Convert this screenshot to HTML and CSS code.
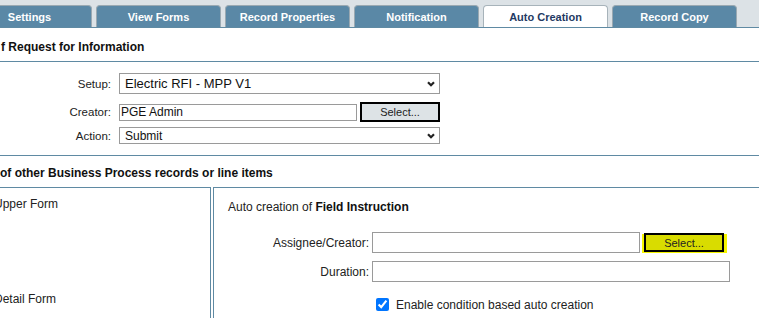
FILE: index.html
```html
<!DOCTYPE html>
<html lang="en">
<head>
    <meta charset="UTF-8">
    <title>Auto Creation</title>
    <link rel="stylesheet" href="styles.css">
</head>
<body>
    <!-- Tabs -->
    <div class="tabs">
        <div class="tab">Settings</div>
        <div class="tab">View Forms</div>
        <div class="tab">Record Properties</div>
        <div class="tab">Notification</div>
        <div class="tab active">Auto Creation</div>
        <div class="tab">Record Copy</div>
    </div>

    <!-- Request for Information -->
    <div class="section-title">f Request for Information</div>
    <div class="setup">
        <div class="row row-setup">
            <label class="lbl">Setup:</label>
            <div class="select select-big">
                <span>Electric RFI - MPP V1</span>
                <svg class="chev" width="8" height="6" viewBox="0 0 8 6"><path d="M1 1.2 L4 4.2 L7 1.2" fill="none" stroke="#222" stroke-width="2"/></svg>
            </div>
        </div>
        <div class="row row-creator">
            <label class="lbl">Creator:</label>
            <input class="text creator" type="text" value="PGE Admin">
            <button class="btn">Select...</button>
        </div>
        <div class="row row-action">
            <label class="lbl">Action:</label>
            <div class="select select-small">
                <span>Submit</span>
                <svg class="chev" width="8" height="6" viewBox="0 0 8 6"><path d="M1 1.2 L4 4.2 L7 1.2" fill="none" stroke="#222" stroke-width="2"/></svg>
            </div>
        </div>
    </div>

    <!-- Other records -->
    <div class="section-title title-2">of other Business Process records or line items</div>
    <div class="panels">
        <div class="forms">
            <div class="form-name">Upper Form</div>
            <div class="form-name detail">Detail Form</div>
        </div>
        <div class="detail-panel">
            <div class="panel-title">Auto creation of <b>Field Instruction</b></div>
            <div class="prow">
                <label class="plbl">Assignee/Creator:</label>
                <input class="text assignee" type="text">
                <button class="btn btn-hl">Select...</button>
            </div>
            <div class="prow prow-2">
                <label class="plbl">Duration:</label>
                <input class="text duration" type="text">
            </div>
            <div class="check-row">
                <input type="checkbox" id="cond" checked>
                <label for="cond">Enable condition based auto creation</label>
            </div>
        </div>
    </div>
</body>
</html>
```

FILE: styles.css
```css
* {
    box-sizing: border-box;
}

body {
    margin: 0;
    font-family: 'Liberation Sans', Arial, sans-serif;
    font-size: 12px;
    color: #111;
    background: #fff;
    overflow: hidden;
}

.tabs {
    display: flex;
    gap: 4px;
    height: 28px;
    padding-top: 5px;
    padding-left: 0;
    background: #dce2e6;
    border-bottom: 1px solid #5f8aa3;
    overflow: hidden;
}

.tab {
    flex: 0 0 125px;
    height: 22px;
    background: #5a88a6;
    border: 1px solid #9aa9b2;
    border-bottom: none;
    border-radius: 4px 4px 0 0;
    color: #fff;
    font-weight: bold;
    font-size: 11px;
    text-align: center;
    line-height: 22px;
}

.tab:first-child {
    margin-left: -33px;
}

.tab.active {
    background: #fff;
    color: #1f3a63;
    border-color: #a7b3ba;
}

.section-title {
    height: 34px;
    padding-top: 12px;
    padding-left: 1px;
    font-weight: bold;
    font-size: 12px;
    line-height: 15px;
    border-bottom: 1px solid #5f8aa3;
}

.setup {
    padding: 11px 0 11px 0;
    border-bottom: 1px solid #5f8aa3;
}

.row {
    display: flex;
    align-items: center;
}

.row-setup {
    height: 21px;
}

.row-creator {
    height: 20px;
    margin-top: 8px;
}

.row-action {
    height: 17px;
    margin-top: 5px;
}

.lbl {
    width: 111px;
    margin-right: 8px;
    text-align: right;
    font-size: 11.5px;
    color: #222;
}

.select {
    display: flex;
    align-items: center;
    justify-content: space-between;
    width: 321px;
    border: 1px solid #9a9a9a;
    padding: 0 4px 0 5px;
    background: #fff;
}

.select-big {
    height: 21px;
    font-size: 13px;
}

.select-small {
    height: 17px;
    font-size: 12px;
}

.chev path {
    stroke-width: 2.2;
}

.text {
    font-family: 'Liberation Sans', Arial, sans-serif;
    font-size: 12px;
    border: 1px solid #9a9a9a;
    padding: 0 1px;
    margin: 0;
    outline: none;
    color: #111;
}

.creator {
    width: 238px;
    height: 17px;
}

.btn {
    font-family: 'Liberation Sans', Arial, sans-serif;
    font-size: 11px;
    color: #222;
    background: #dde3e6;
    border: 2px solid #000;
    margin: 0 0 0 3px;
    padding: 0;
    width: 80px;
    height: 20px;
}

.section-title.title-2 {
    height: 31px;
    padding-top: 10px;
    padding-left: 0;
    border-bottom: none;
}

.panels {
    display: flex;
    gap: 2px;
    height: 132px;
}

.forms {
    flex: 0 0 211px;
    border-top: 1px solid #5f8aa3;
    border-right: 1px solid #5f8aa3;
    padding-top: 9px;
}

.form-name {
    margin-left: -6px;
    font-size: 12px;
    line-height: 14px;
    color: #222;
}

.form-name.detail {
    margin-top: 81px;
}

.detail-panel {
    flex: 1;
    margin-right: -20px;
    border-top: 1px solid #5f8aa3;
    border-left: 1px solid #5f8aa3;
    padding: 12px 0 0 14px;
}

.panel-title {
    font-size: 12px;
    line-height: 14px;
    color: #222;
}

.panel-title b {
    color: #111;
}

.prow {
    display: flex;
    align-items: center;
    height: 21px;
    margin-top: 18px;
}

.prow-2 {
    margin-top: 8px;
}

.plbl {
    width: 141px;
    margin-right: 3px;
    text-align: right;
    color: #222;
}

.assignee {
    width: 268px;
    height: 21px;
}

.duration {
    width: 358px;
    height: 21px;
}

.btn-hl {
    width: 80px;
    height: 19px;
    margin-left: 4px;
    background: #d9dc00;
    box-shadow: 3px 1px 0 #f4f400, -2px 1px 0 #f4f400;
}

.check-row {
    display: flex;
    align-items: center;
    margin-top: 15px;
    padding-left: 144px;
    height: 15px;
    color: #222;
}

.check-row input {
    width: 13px;
    height: 13px;
    margin: 0 7px 0 4px;
    accent-color: #0075ff;
}
```
